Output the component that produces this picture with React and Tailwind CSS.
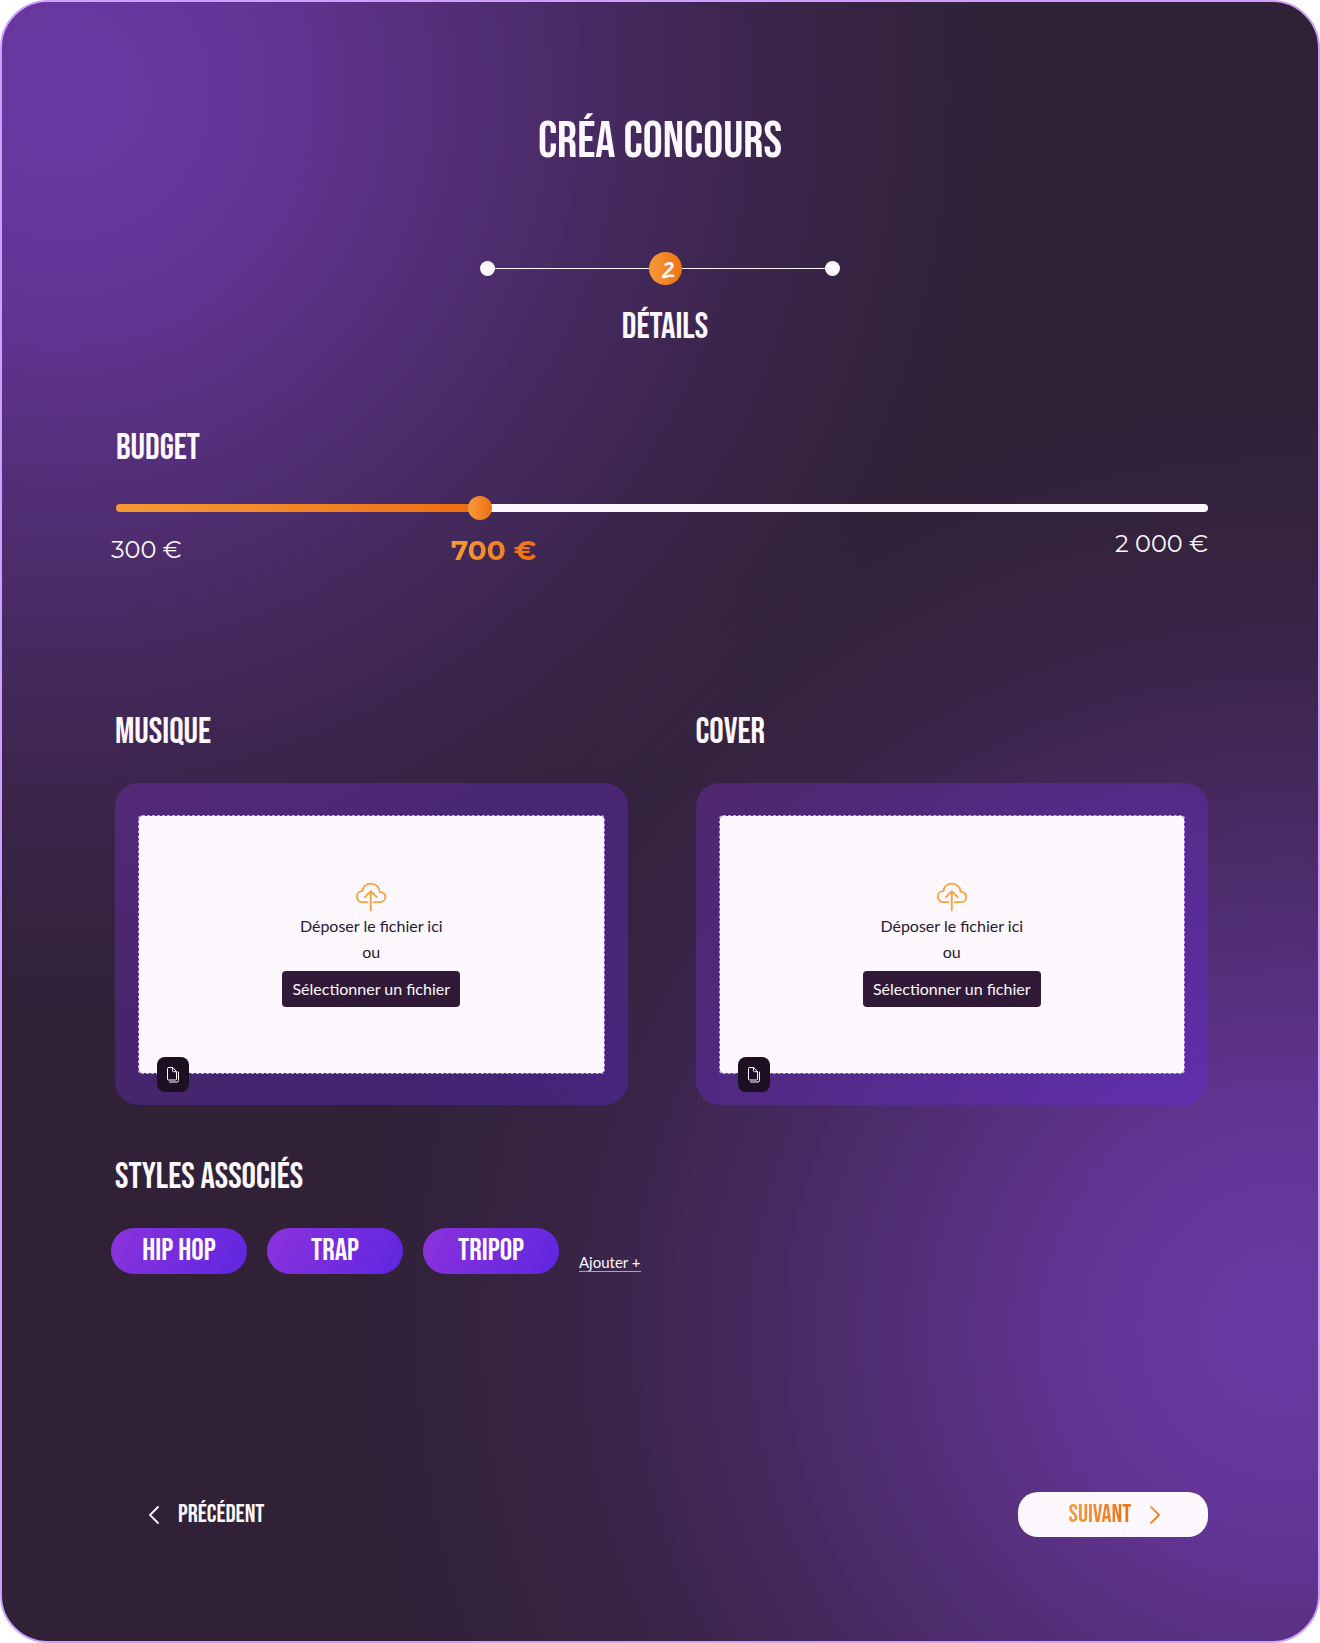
import { useState } from "react";

const display =
  "font-['Bebas_Neue','Liberation_Sans_Narrow','Liberation_Sans',sans-serif] font-normal uppercase text-[#fcf8fd]";

function CloudUploadIcon() {
  return (
    <svg width="32" height="30" viewBox="0 0 32 30" fill="none" stroke="#f7a23b" strokeWidth="1.8" strokeLinecap="round" strokeLinejoin="round" aria-hidden="true">
      <path d="M12.5 20.2H7.8C4.2 20.2 1.8 17.8 1.8 14.6c0-3.2 2.4-5.4 5.6-5.5C7.7 4.6 11.3 1.6 15.8 1.6c4.8 0 8.500 3.400 8.800 8.200 3.400-.1 5.700 2.200 5.700 5.200 0 3-2.300 5.200-5.100 5.200H19" />
      <path d="M15.800 28.400V9.200M9.900 15.100l5.900-5.900 5.900 5.900" />
    </svg>
  );
}

function FilesIcon() {
  return (
    <svg width="14" height="17" viewBox="0 0 14 17" fill="none" stroke="#fcf8fd" strokeWidth="1" strokeLinecap="round" strokeLinejoin="round" aria-hidden="true">
      <path d="M2.500 1.500h4.200l3.800 4v7.500a1 1 0 0 1-1 1h-7a1 1 0 0 1-1-1V2.500a1 1 0 0 1 1-1z" />
      <path d="M6.500 1.500v3.200a1 1 0 0 0 1 1h3" />
      <path d="M12.500 6v8.500a1.500 1.500 0 0 1-1.500 1.500H3.500" />
    </svg>
  );
}

function Chevron({ left = false, stroke }) {
  return (
    <svg width="12" height="20" viewBox="0 0 12 20" fill="none" stroke={stroke} strokeWidth="1.8" strokeLinecap="round" strokeLinejoin="round" aria-hidden="true">
      <defs>
        <linearGradient id="orange" x1="0" y1="0" x2="1" y2="1">
          <stop offset="0" stopColor="#f59c3a" />
          <stop offset="1" stopColor="#ee700f" />
        </linearGradient>
      </defs>
      <path d={left ? "M10 2 2 10l8 8" : "M2 2l8 8-8 8"} />
    </svg>
  );
}

function Stepper() {
  return (
    <div className="mx-auto mt-[86px] w-[360px]">
      <ol className="flex items-center">
        <li className="size-[15px] rounded-full bg-[#fcf8fd]" aria-label="Étape 1" />
        <li className="h-px flex-[15] bg-[#fcf8fd]" aria-hidden="true" />
        <li className="flex size-[33px] items-center justify-center rounded-full bg-linear-to-r from-[#f59a38] to-[#ef720f] font-['Caveat','Caveat_Brush',Lato,sans-serif] text-[32px] leading-8 font-bold text-[#fcf8fd]" aria-current="step">
          2
        </li>
        <li className="h-px flex-[14] bg-[#fcf8fd]" aria-hidden="true" />
        <li className="size-[15px] rounded-full bg-[#fcf8fd]" aria-label="Étape 3" />
      </ol>
      <h2 className={`${display} mt-[23px] pl-2.5 text-center text-4xl leading-10`}>Détails</h2>
    </div>
  );
}

function Budget() {
  const [position, setPosition] = useState(33);
  return (
    <section className="pl-px">
      <label htmlFor="budget" className={`${display} mt-[81px] block text-4xl leading-10`}>
        Budget
      </label>
      <div className="mt-[27px] flex h-6 items-center">
        <input
          id="budget"
          type="range"
          min="0"
          max="100"
          value={position}
          aria-valuetext="700 €"
          onChange={(e) => setPosition(Number(e.target.value))}
          style={{ backgroundSize: `${position}% 100%` }}
          className="h-2 w-full cursor-pointer appearance-none rounded-full bg-[#fcf8fd] bg-linear-to-r from-[#f59a38] to-[#ef6f0e] bg-no-repeat [&::-webkit-slider-thumb]:size-6 [&::-webkit-slider-thumb]:appearance-none [&::-webkit-slider-thumb]:rounded-full [&::-webkit-slider-thumb]:bg-linear-to-r [&::-webkit-slider-thumb]:from-[#f59a38] [&::-webkit-slider-thumb]:to-[#ef6f0e]"
        />
      </div>
      <div className="mt-2 -ml-[5px] flex items-start font-['Proxima_Nova','Montserrat',Lato,sans-serif] text-2xl leading-8">
        <span className="pt-1.5" style={{ width: `${position - 2}%` }}>300 €</span>
        <output htmlFor="budget" className="bg-linear-to-r from-[#f59a38] to-[#ef6f0e] bg-clip-text pt-1.5 text-[28px] font-bold text-transparent">
          700 €
        </output>
        <span className="ml-auto">2 000 €</span>
      </div>
    </section>
  );
}

function Upload({ title }) {
  return (
    <section>
      <h2 className={`${display} text-4xl leading-10`}>{title}</h2>
      <div className="mt-[30px] rounded-3xl bg-linear-to-br from-[#8a33dc]/30 to-[#5f26e0]/35 px-[23px] pt-8 pb-[31px]">
        <div className="relative flex h-[259px] flex-col items-center rounded border border-dashed border-[#cf9fff] bg-[#fcf8fd] bg-clip-padding pt-[66px] text-base leading-[26px] text-[#2a1833]">
          <CloudUploadIcon />
          <p className="mt-px">Déposer le fichier ici</p>
          <p>ou</p>
          <button type="button" className="mt-1.5 rounded bg-[#311938] px-2.5 py-[5px] text-[#fcf8fd]">
            Sélectionner un fichier
          </button>
          <button type="button" aria-label="Copier" className="absolute -bottom-[19px] left-[18px] flex h-[35px] w-8 items-center justify-center rounded-lg bg-[#1d1022]">
            <FilesIcon />
          </button>
        </div>
      </div>
    </section>
  );
}

export default function App() {
  return (
    <div className="bg-white">
      <main className="flex min-h-screen flex-col rounded-[48px] border-2 border-[#cf9fff] bg-[#302137] bg-[radial-gradient(930px_930px_at_60px_90px,#6a39a3_0%,#643597_21%,#643597c0_37%,#64359770_58%,#64359730_78%,#64359700_100%),radial-gradient(930px_930px_at_calc(100%-30px)_calc(100%-310px),#6a39a3_0%,#643597_21%,#643597c0_36%,#64359770_56%,#64359728_76%,#64359700_100%)] pt-[116px] pr-[110px] pb-[103px] pl-[113px] font-[Lato,sans-serif] text-[#fcf8fd]">
        <header className="pr-[3px]">
          <h1 className={`${display} text-center text-[50px] leading-12`}>Créa concours</h1>
          <Stepper />
        </header>
        <Budget />
        <div className="mt-[147px] grid grid-cols-2 gap-[68px]">
          <Upload title="Musique" />
          <Upload title="Cover" />
        </div>
        <section>
          <h2 className={`${display} mt-[53px] text-4xl leading-10`}>Styles associés</h2>
          <div className="mt-[30px] -ml-1 flex gap-5">
            {["Hip hop", "Trap", "Tripop"].map((style) => (
              <button key={style} type="button" className={`${display} h-[46px] w-[136px] rounded-full bg-linear-[115deg] from-[#8b33dc] to-[#5f26e0] text-[31px] leading-10`}>
                {style}
              </button>
            ))}
            <a href="#ajouter" className="mb-0.5 self-end border-b border-[#fcf8fd]/60 text-[15px] leading-[18px]">
              Ajouter +
            </a>
          </div>
        </section>
        <nav className="mt-[218px] flex items-center justify-between">
          <button type="button" className={`${display} flex h-[45px] items-center gap-[18px] px-[33px] text-[25px]`}>
            <Chevron left stroke="#fcf8fd" />
            Précédent
          </button>
          <button type="button" className={`${display} flex h-[45px] w-[190px] items-center justify-center gap-[18px] rounded-[20px] bg-[#fcf8fd] pl-1 text-[25px]`}>
            <span className="bg-linear-to-r from-[#f59a38] to-[#ef6f0e] bg-clip-text text-transparent">Suivant</span>
            <Chevron stroke="url(#orange)" />
          </button>
        </nav>
      </main>
    </div>
  );
}
